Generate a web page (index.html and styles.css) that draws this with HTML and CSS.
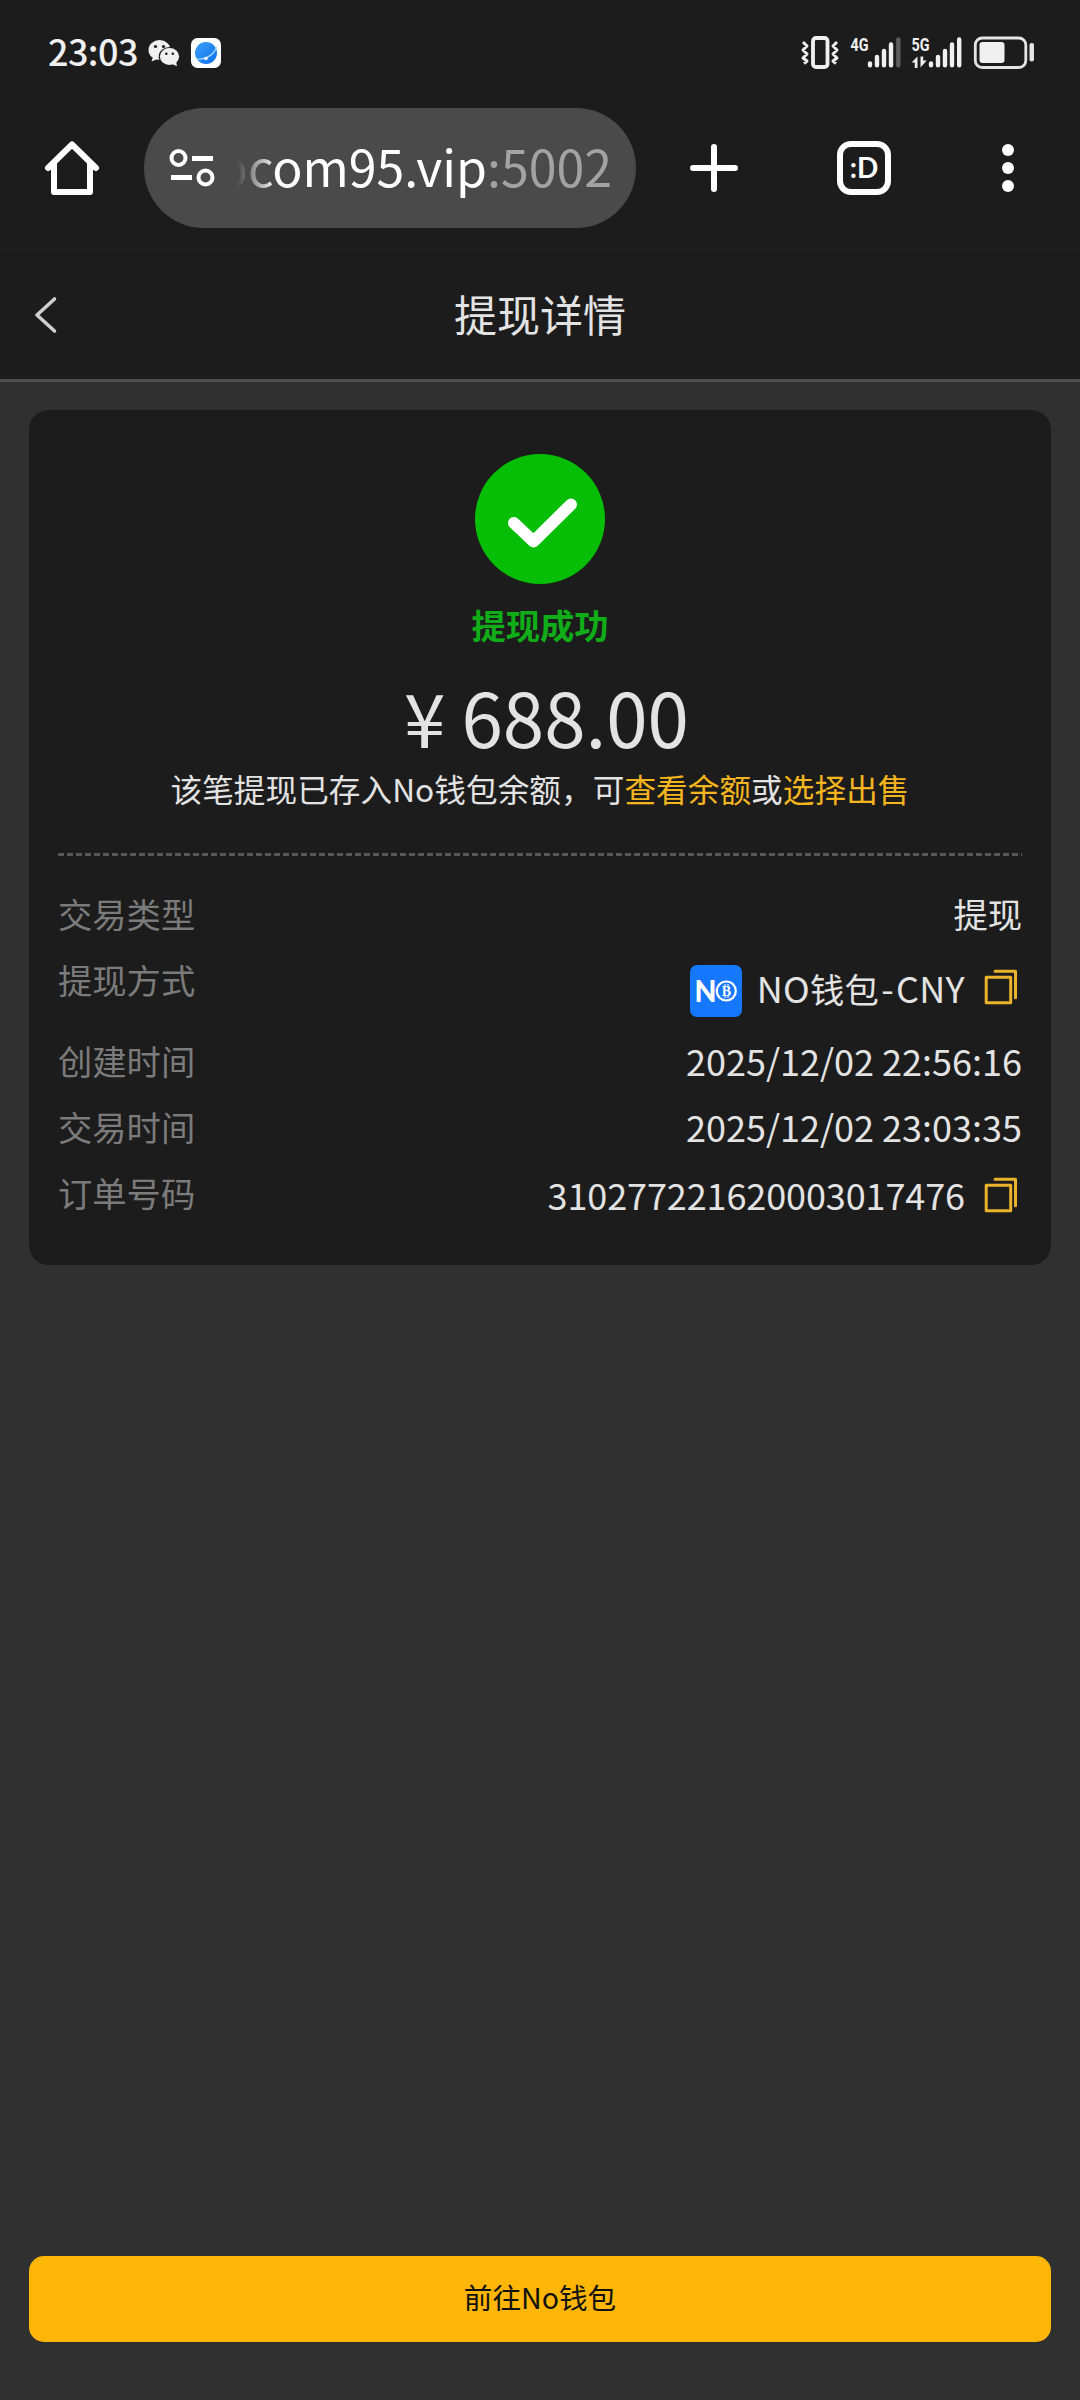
FILE: index.html
```html
<!DOCTYPE html>
<html lang="zh-CN">
<head>
<meta charset="utf-8">
<title>提现详情</title>
<link rel="stylesheet" href="styles.css">
</head>
<body>
<div class="status">
  <span class="clock">23:03</span>
  <svg class="wechat" width="32" height="28" viewBox="0 0 32 28">
    <ellipse cx="11.5" cy="11" rx="11" ry="10" fill="#f0f0f0"/>
    <path d="M5 18l-1.500 4.500 6-2.500z" fill="#f0f0f0"/>
    <ellipse cx="21.500" cy="17.500" rx="10.800" ry="9.600" fill="#1c1c1c"/>
    <ellipse cx="21.500" cy="17.500" rx="9.600" ry="8.500" fill="#f0f0f0"/>
    <path d="M24 25l5 2.300-1-5z" fill="#f0f0f0"/>
    <g fill="#1c1c1c"><circle cx="7.500" cy="7.500" r="1.600"/><circle cx="15.500" cy="7.500" r="1.600"/><circle cx="18.300" cy="14.700" r="1.300"/><circle cx="24.800" cy="14.700" r="1.300"/></g>
  </svg>
  <svg class="browser" width="30" height="30" viewBox="0 0 30 30">
    <defs><linearGradient id="globe" x1="0" y1="0" x2="1" y2="1"><stop offset="0" stop-color="#3ba0f6"/><stop offset="1" stop-color="#0d6ff0"/></linearGradient></defs>
    <rect width="30" height="30" rx="6.500" fill="#fff"/>
    <circle cx="15" cy="15" r="11" fill="url(#globe)"/>
    <path d="M5 20.500C12 22.500 23 18 25.500 9" fill="none" stroke="#a9dcff" stroke-width="1.200"/>
    <circle cx="15" cy="20.500" r="1.700" fill="#fff"/>
  </svg>
  <svg class="signals" width="236" height="36" viewBox="800 34 236 36">
    <g fill="none" stroke="#f0f0f0" stroke-linejoin="round">
      <rect x="813" y="38" width="14.500" height="29" rx="3" stroke-width="3.800"/>
      <path d="M803 42l4 4-4 4 4 4-4 4 4 3-3 2.500M837 42l-4 4 4 4-4 4 4 4-4 3 3 2.500" stroke-width="3"/>
    </g>
    <g class="net">
      <text x="850.500" y="51" textLength="18" lengthAdjust="spacingAndGlyphs">4G</text>
      <text x="911.500" y="51" textLength="18" lengthAdjust="spacingAndGlyphs">5G</text>
    </g>
    <g stroke="#f0f0f0" stroke-width="4.400" stroke-linecap="round">
      <path d="M870 63.500v1.800M877 57v8.300M884 51v14.300M891 44.500v20.800"/>
      <path d="M898.300 39.500v25.800" stroke="#5c5c5c"/>
      <path d="M931 63.500v1.800M938 57v8.300M945 51v14.300M952 44.500v20.800M959.200 39.500v25.800"/>
    </g>
    <path d="M911.500 62.500l6-6v11.500h-2.700v-5.500zM920.500 56.500h2.700v4l3.500 0-6.200 7z" fill="#f0f0f0"/>
    <rect x="975.300" y="38" width="50.500" height="29.500" rx="7" fill="none" stroke="#e4e4e4" stroke-width="2.800"/>
    <rect x="979.500" y="42" width="25" height="21" rx="3" fill="#f0f0f0"/>
    <rect x="1029.500" y="43" width="4.500" height="18.500" rx="2" fill="#e4e4e4"/>
  </svg>
</div>

<div class="toolbar">
  <svg class="home" width="56" height="56" viewBox="44 140 56 56">
    <path d="M48 168l24-23.500L96 168M54 163v29h36v-29" fill="none" stroke="#fff" stroke-width="6" stroke-linecap="round" stroke-linejoin="round"/>
  </svg>
  <div class="address">
    <svg width="46" height="40" viewBox="169 148 46 40">
      <g fill="none" stroke="#fff"><circle cx="178.500" cy="158" r="7" stroke-width="4"/><circle cx="205.500" cy="177.500" r="7" stroke-width="4"/><path d="M192 158.500h21M171 177.500h21" stroke-width="5"/></g>
    </svg>
    <div class="url"><span>ocom95.vip<span class="port">:5002</span></span></div>
  </div>
  <svg class="plus" width="48" height="48" viewBox="0 0 48 48"><path d="M24 3v42M3 24h42" stroke="#fff" stroke-width="6" stroke-linecap="round"/></svg>
  <div class="tabs">:D</div>
  <svg class="more" width="12" height="48" viewBox="0 0 12 48"><g fill="#fff"><circle cx="6" cy="6" r="6"/><circle cx="6" cy="24" r="6"/><circle cx="6" cy="42" r="6"/></g></svg>
</div>

<header class="header">
  <svg class="back" width="26" height="38" viewBox="0 0 26 38"><path d="M21.500 3L4 19l17.500 16" fill="none" stroke="#cfcfcf" stroke-width="3.600" stroke-linecap="round" stroke-linejoin="round"/></svg>
  <h1>提现详情</h1>
</header>

<main class="page">
  <section class="card">
    <svg class="check" width="130" height="130" viewBox="0 0 130 130"><circle cx="65" cy="65" r="65" fill="#05be05"/><path d="M39 69l19.500 18.500L96 50.500" fill="none" stroke="#fff" stroke-width="12" stroke-linecap="round" stroke-linejoin="round"/></svg>
    <div class="result">提现成功</div>
    <div class="amount"><span class="yen">¥</span><span>688.00</span></div>
    <div class="note">该笔提现已存入No钱包余额，可<a>查看余额</a>或<a>选择出售</a></div>
    <div class="divider"></div>
    <div class="row"><span class="label">交易类型</span><span class="value cjk">提现</span></div>
    <div class="row method"><span class="label">提现方式</span>
      <span class="value">
        <svg class="logo" width="52" height="52" viewBox="0 0 52 52">
          <rect width="52" height="52" rx="7" fill="#1677ff"/>
          <text x="4.500" y="37" class="logo-n" textLength="22" lengthAdjust="spacingAndGlyphs">N</text>
          <circle cx="36.300" cy="26" r="9.500" fill="none" stroke="#fff" stroke-width="2.200"/>
          <text x="36.300" y="31" class="logo-b">B</text>
          <path d="M35 19v2.500M38 19v2.500M35 30.500V33M38 30.500V33" stroke="#fff" stroke-width="1.200"/>
        </svg>
        <span class="wallet">NO<span class="cjk">钱包</span><span class="dash">-</span>CNY</span>
        <svg class="copy" width="34" height="36" viewBox="0 0 34 36"><path d="M2.200 8.200h24.500v25.600H2.200zM11 2.200h20.500v26.500" fill="none" stroke="#eab32b" stroke-width="3" stroke-linecap="round" stroke-linejoin="round"/></svg>
      </span></div>
    <div class="row"><span class="label">创建时间</span><span class="value">2025/12/02 22:56:16</span></div>
    <div class="row"><span class="label">交易时间</span><span class="value">2025/12/02 23:03:35</span></div>
    <div class="row order"><span class="label">订单号码</span>
      <span class="value"><span class="number">310277221620003017476</span>
        <svg class="copy" width="34" height="36" viewBox="0 0 34 36"><path d="M2.200 8.200h24.500v25.600H2.200zM11 2.200h20.500v26.500" fill="none" stroke="#eab32b" stroke-width="3" stroke-linecap="round" stroke-linejoin="round"/></svg>
      </span></div>
  </section>
  <button class="go">前往No钱包</button>
</main>
</body>
</html>
```
FILE: styles.css
```css
* { box-sizing: border-box; }
body {
  margin: 0;
  width: 1080px;
  height: 2400px;
  display: flex;
  flex-direction: column;
  background: #303030;
  color: #e3e3e3;
  font-family: "Noto Sans CJK SC", sans-serif;
}
svg { display: block; flex: none; }

.status {
  height: 104px;
  display: flex;
  align-items: flex-start;
  padding: 34px 44px 0 48px;
  background: #1c1c1c;
}
.clock {
  width: 100px;
  font-size: 36px;
  font-weight: 500;
  line-height: 32px;
  letter-spacing: -0.6px;
  color: #f0f0f0;
}
.wechat { margin-top: 5px; }
.browser { margin: 4px 0 0 11px; }
.signals { margin-left: auto; }
.net text { font: bold 19px "Roboto", sans-serif; fill: #f0f0f0; }

.toolbar {
  height: 149px;
  display: flex;
  align-items: center;
  padding: 0 66px 21px 44px;
  background: #1c1c1c;
}
.address {
  display: flex;
  align-items: center;
  width: 492px;
  height: 120px;
  margin-left: 44px;
  padding-left: 25px;
  border-radius: 60px;
  background: #4a4a4a;
}
.url {
  display: flex;
  justify-content: flex-end;
  width: 397px;
  padding-bottom: 7px;
  font-size: 50px;
  line-height: 74px;
  color: #fff;
  white-space: nowrap;
  -webkit-mask-image: linear-gradient(to right, transparent 22px, #000 62px);
  mask-image: linear-gradient(to right, transparent 22px, #000 62px);
}
.port { color: #a3a3a3; }
.plus { margin-left: 54px; }
.tabs {
  width: 54px;
  height: 54px;
  margin-left: 99px;
  border: 6px solid #fff;
  border-radius: 14px;
  color: #fff;
  font: bold 28px/41px "Lato", sans-serif;
  text-align: center;
}
.more { margin-left: auto; }

.header {
  display: grid;
  grid-template-columns: 100px 1fr 100px;
  align-items: center;
  height: 129px;
  padding-bottom: 4px;
  border-top: 1px solid #181818;
  border-bottom: 3px solid #505050;
  background: #1c1c1c;
}
.back { margin-left: 33px; }
.header h1 {
  margin: 0;
  padding-bottom: 3px;
  font-size: 43px;
  font-weight: 400;
  line-height: 60px;
  text-align: center;
}

.page {
  flex: 1;
  display: flex;
  flex-direction: column;
  justify-content: space-between;
  padding: 28px 29px 58px;
}
.card {
  height: 855px;
  display: flex;
  flex-direction: column;
  padding: 44px 29px 0;
  border-radius: 20px;
  background: #1c1c1c;
}
.check { align-self: center; }
.result {
  margin-top: 15px;
  font-size: 34.3px;
  font-weight: 700;
  line-height: 50px;
  text-align: center;
  color: #10ad18;
}
.amount {
  display: flex;
  justify-content: center;
  gap: 16px;
  margin-top: 27px;
  padding-left: 13px;
  font-size: 74.5px;
  line-height: 80px;
}
.note {
  margin-top: 7px;
  font-size: 31.6px;
  letter-spacing: 0.08px;
  line-height: 50px;
  text-align: center;
  white-space: nowrap;
}
.note a { color: #f5b51e; }
.divider {
  flex: none;
  height: 3px;
  margin: 40px 0 24px;
  background: repeating-linear-gradient(to right, #575757 0 6px, transparent 6px 9px);
}
.row {
  display: flex;
  justify-content: space-between;
  height: 66px;
  line-height: 66px;
}
.label { font-size: 34.3px; color: #7b7b7b; }
.value { display: flex; font-size: 36px; white-space: nowrap; }
.cjk { font-size: 34.3px; }
.method { height: 81px; }
.logo { margin: 19px 15px 0 0; }
.logo-n { font: 900 30px "Lato", sans-serif; fill: #fff; }
.logo-b { font: bold 14px "Liberation Serif", serif; fill: #fff; text-anchor: middle; }
.wallet { line-height: 82px; letter-spacing: 0.3px; }
.dash { padding: 0 2px; }
.copy { margin: 23px 4px 0 19px; }
.order .copy { margin-top: 18px; }
.number { line-height: 70px; letter-spacing: -0.1px; }

.go {
  height: 86px;
  padding: 0 0 6px;
  border: 0;
  border-radius: 15px;
  background: #ffb606;
  color: #111;
  font: 28.6px "Noto Sans CJK SC", sans-serif;
}
```
